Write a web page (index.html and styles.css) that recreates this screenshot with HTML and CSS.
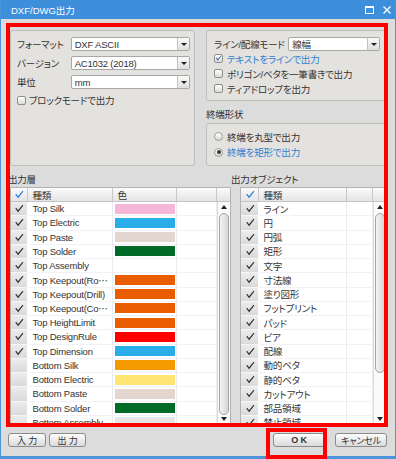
FILE: index.html
```html
<!DOCTYPE html>
<html lang="ja">
<head>
<meta charset="utf-8">
<link rel="stylesheet" href="styles.css">
</head>
<body>
<svg width="0" height="0" class="defs">
  <defs>
    <symbol id="chk" viewBox="0 0 10 9">
      <path d="M1.2 4.6 L2.4 4.1 L4 6.2 L8.6 0.8 L9.4 1.4 L4.1 8.3 Z" fill="currentColor"/>
    </symbol>
  </defs>
</svg>
<div class="window">
  <div class="titlebar">
    <span class="title">DXF/DWG出力</span>
    <div class="tb-icons">
      <svg width="9" height="8" viewBox="0 0 9 8"><rect x="0.5" y="0.5" width="8" height="7" fill="none" stroke="#fff"/><rect x="0" y="0" width="9" height="2" fill="#fff"/></svg>
      <svg width="8" height="8" viewBox="0 0 8 8"><path d="M0.5 0.5 L7.5 7.5 M7.5 0.5 L0.5 7.5" stroke="#fff" stroke-width="1.4"/></svg>
    </div>
  </div>

  <div class="top">
    <div class="group lgroup">
      <div class="field"><span class="lbl">フォーマット</span><div class="combo cl"><span class="ctext">DXF ASCII</span><span class="carrow"><i></i></span></div></div>
      <div class="field"><span class="lbl">バージョン</span><div class="combo cl"><span class="ctext">AC1032 (2018)</span><span class="carrow"><i></i></span></div></div>
      <div class="field"><span class="lbl">単位</span><div class="combo cl"><span class="ctext">mm</span><span class="carrow"><i></i></span></div></div>
      <div class="check"><span class="box"></span><span>ブロックモードで出力</span></div>
    </div>
    <div class="rcol">
      <div class="group rgroup1">
        <div class="field"><span class="lbl2">ライン/配線モード</span><div class="combo cr"><span class="ctext">線幅</span><span class="carrow"><i></i></span></div></div>
        <div class="check rc first"><span class="box on"><svg width="9" height="8"><use href="#chk"/></svg></span><span class="blue">テキストをラインで出力</span></div>
        <div class="check rc"><span class="box"></span><span>ポリゴン/ベタを一筆書きで出力</span></div>
        <div class="check rc"><span class="box"></span><span>ティアドロップを出力</span></div>
      </div>
      <div class="sec-label">終端形状</div>
      <div class="group rgroup2">
        <div class="radio"><span class="rb"></span><span>終端を丸型で出力</span></div>
        <div class="radio"><span class="rb on"></span><span class="blue">終端を矩形で出力</span></div>
      </div>
    </div>
  </div>

  <div class="lists">
    <div class="lsec">
      <div class="list-label">出力層</div>
      <div class="table ltable">
        <div class="thead">
          <div class="hc c-chk hchk"><svg width="10" height="9"><use href="#chk"/></svg></div>
          <div class="hc c-name">種類</div>
          <div class="hc c-color">色</div>
          <div class="hc c-blank"></div>
          <div class="hc c-sh"></div>
        </div>
        <div class="tbody">
          <div class="rows">
            <div class="row"><div class="c-chk chk"><svg width="10" height="9"><use href="#chk"/></svg></div><div class="c-name nm">Top Silk</div><div class="c-color cc"><i class="sw sw-pink"></i></div><div class="c-blank bl"></div></div>
            <div class="row"><div class="c-chk chk"><svg width="10" height="9"><use href="#chk"/></svg></div><div class="c-name nm">Top Electric</div><div class="c-color cc"><i class="sw sw-sky"></i></div><div class="c-blank bl"></div></div>
            <div class="row"><div class="c-chk chk"><svg width="10" height="9"><use href="#chk"/></svg></div><div class="c-name nm">Top Paste</div><div class="c-color cc"><i class="sw sw-beige"></i></div><div class="c-blank bl"></div></div>
            <div class="row"><div class="c-chk chk"><svg width="10" height="9"><use href="#chk"/></svg></div><div class="c-name nm">Top Solder</div><div class="c-color cc"><i class="sw sw-green"></i></div><div class="c-blank bl"></div></div>
            <div class="row"><div class="c-chk chk"><svg width="10" height="9"><use href="#chk"/></svg></div><div class="c-name nm">Top Assembly</div><div class="c-color cc"></div><div class="c-blank bl"></div></div>
            <div class="row"><div class="c-chk chk"><svg width="10" height="9"><use href="#chk"/></svg></div><div class="c-name nm">Top Keepout(Ro⋯</div><div class="c-color cc"><i class="sw sw-orange"></i></div><div class="c-blank bl"></div></div>
            <div class="row"><div class="c-chk chk"><svg width="10" height="9"><use href="#chk"/></svg></div><div class="c-name nm">Top Keepout(Drill)</div><div class="c-color cc"><i class="sw sw-orange"></i></div><div class="c-blank bl"></div></div>
            <div class="row"><div class="c-chk chk"><svg width="10" height="9"><use href="#chk"/></svg></div><div class="c-name nm">Top Keepout(Co⋯</div><div class="c-color cc"><i class="sw sw-orange"></i></div><div class="c-blank bl"></div></div>
            <div class="row"><div class="c-chk chk"><svg width="10" height="9"><use href="#chk"/></svg></div><div class="c-name nm">Top HeightLimit</div><div class="c-color cc"><i class="sw sw-orange"></i></div><div class="c-blank bl"></div></div>
            <div class="row"><div class="c-chk chk"><svg width="10" height="9"><use href="#chk"/></svg></div><div class="c-name nm">Top DesignRule</div><div class="c-color cc"><i class="sw sw-red"></i></div><div class="c-blank bl"></div></div>
            <div class="row"><div class="c-chk chk"><svg width="10" height="9"><use href="#chk"/></svg></div><div class="c-name nm">Top Dimension</div><div class="c-color cc"><i class="sw sw-sky"></i></div><div class="c-blank bl"></div></div>
            <div class="row"><div class="c-chk chk"></div><div class="c-name nm">Bottom Silk</div><div class="c-color cc"><i class="sw sw-amber"></i></div><div class="c-blank bl"></div></div>
            <div class="row"><div class="c-chk chk"></div><div class="c-name nm">Bottom Electric</div><div class="c-color cc"><i class="sw sw-yellow"></i></div><div class="c-blank bl"></div></div>
            <div class="row"><div class="c-chk chk"></div><div class="c-name nm">Bottom Paste</div><div class="c-color cc"><i class="sw sw-beige"></i></div><div class="c-blank bl"></div></div>
            <div class="row"><div class="c-chk chk"></div><div class="c-name nm">Bottom Solder</div><div class="c-color cc"><i class="sw sw-green"></i></div><div class="c-blank bl"></div></div>
            <div class="row"><div class="c-chk chk"></div><div class="c-name nm">Bottom Assembly</div><div class="c-color cc"><i class="sw sw-grey"></i></div><div class="c-blank bl"></div></div>
          </div>
          <div class="vscroll"><i class="up"></i><span class="thumb"></span><i class="down"></i></div>
        </div>
      </div>
    </div>

    <div class="rsec">
      <div class="list-label">出力オブジェクト</div>
      <div class="table rtable">
        <div class="thead">
          <div class="hc c-chk hchk"><svg width="10" height="9"><use href="#chk"/></svg></div>
          <div class="hc c-name">種類</div>
          <div class="hc c-blank"></div>
          <div class="hc c-sh"></div>
        </div>
        <div class="tbody">
          <div class="rows">
            <div class="row"><div class="c-chk chk"><svg width="10" height="9"><use href="#chk"/></svg></div><div class="c-name nm">ライン</div><div class="c-blank bl"></div></div>
            <div class="row"><div class="c-chk chk"><svg width="10" height="9"><use href="#chk"/></svg></div><div class="c-name nm">円</div><div class="c-blank bl"></div></div>
            <div class="row"><div class="c-chk chk"><svg width="10" height="9"><use href="#chk"/></svg></div><div class="c-name nm">円弧</div><div class="c-blank bl"></div></div>
            <div class="row"><div class="c-chk chk"><svg width="10" height="9"><use href="#chk"/></svg></div><div class="c-name nm">矩形</div><div class="c-blank bl"></div></div>
            <div class="row"><div class="c-chk chk"><svg width="10" height="9"><use href="#chk"/></svg></div><div class="c-name nm">文字</div><div class="c-blank bl"></div></div>
            <div class="row"><div class="c-chk chk"><svg width="10" height="9"><use href="#chk"/></svg></div><div class="c-name nm">寸法線</div><div class="c-blank bl"></div></div>
            <div class="row"><div class="c-chk chk"><svg width="10" height="9"><use href="#chk"/></svg></div><div class="c-name nm">塗り図形</div><div class="c-blank bl"></div></div>
            <div class="row"><div class="c-chk chk"><svg width="10" height="9"><use href="#chk"/></svg></div><div class="c-name nm">フットプリント</div><div class="c-blank bl"></div></div>
            <div class="row"><div class="c-chk chk"><svg width="10" height="9"><use href="#chk"/></svg></div><div class="c-name nm">パッド</div><div class="c-blank bl"></div></div>
            <div class="row"><div class="c-chk chk"><svg width="10" height="9"><use href="#chk"/></svg></div><div class="c-name nm">ビア</div><div class="c-blank bl"></div></div>
            <div class="row"><div class="c-chk chk"><svg width="10" height="9"><use href="#chk"/></svg></div><div class="c-name nm">配線</div><div class="c-blank bl"></div></div>
            <div class="row"><div class="c-chk chk"><svg width="10" height="9"><use href="#chk"/></svg></div><div class="c-name nm">動的ベタ</div><div class="c-blank bl"></div></div>
            <div class="row"><div class="c-chk chk"><svg width="10" height="9"><use href="#chk"/></svg></div><div class="c-name nm">静的ベタ</div><div class="c-blank bl"></div></div>
            <div class="row"><div class="c-chk chk"><svg width="10" height="9"><use href="#chk"/></svg></div><div class="c-name nm">カットアウト</div><div class="c-blank bl"></div></div>
            <div class="row"><div class="c-chk chk"><svg width="10" height="9"><use href="#chk"/></svg></div><div class="c-name nm">部品領域</div><div class="c-blank bl"></div></div>
            <div class="row"><div class="c-chk chk"><svg width="10" height="9"><use href="#chk"/></svg></div><div class="c-name nm">禁止領域</div><div class="c-blank bl"></div></div>
          </div>
          <div class="vscroll"><i class="up"></i><span class="thumb"></span><i class="down"></i></div>
        </div>
      </div>
    </div>
  </div>

  <div class="buttons">
    <div class="bgroup">
      <div class="btn b-in">入 力</div>
      <div class="btn b-out">出 力</div>
    </div>
    <div class="bgroup bg-right">
      <div class="btn b-ok">O K</div>
      <div class="btn b-cancel">キャンセル</div>
    </div>
  </div>

  <div class="annot annot-main"></div>
  <div class="annot annot-ok"></div>
</div>
</body>
</html>
```

FILE: styles.css
```css
* { box-sizing: border-box; }
html, body { margin: 0; padding: 0; }
body {
  font-family: "Liberation Sans", "Noto Sans CJK JP", sans-serif;
  font-size: 9.5px;
  color: #333;
  font-feature-settings: "palt";
  letter-spacing: -0.2px;
  background: #fff;
}
.defs { position: absolute; width: 0; height: 0; }

.window {
  position: relative;
  width: 396px;
  height: 459px;
  background: #dcdcdc;
  border: solid #4c94da;
  border-width: 0 1px 3px 1px;
  display: flex;
  flex-direction: column;
}

.titlebar {
  height: 19px;
  flex: none;
  background: #3d8edb;
  color: #fff;
  display: flex;
  align-items: center;
  justify-content: space-between;
  padding: 0 4px 0 10px;
}
.title { font-size: 9.5px; letter-spacing: 0; }
.tb-icons { display: flex; align-items: center; gap: 9px; }
.tb-icons svg { display: block; }

/* top area */
.top { display: flex; gap: 11px; padding: 11px 0 0 9px; flex: none; }
.group {
  border: 1px solid #bdbdbd;
  border-radius: 3px;
  background: #e4e2df;
}
.lgroup { width: 185px; height: 136px; padding: 6px 4px 0 6px; }
.field { display: flex; align-items: center; height: 14px; margin-bottom: 5px; }
.lbl { width: 54px; white-space: nowrap; }
.lbl2 { width: 74.5px; white-space: nowrap; }
.combo {
  height: 14px;
  border: 1px solid #a7a7a7;
  border-radius: 2px;
  background: #fff;
  display: flex;
  align-items: stretch;
}
.cl { width: 120px; }
.cr { width: 92px; }
.ctext { flex: 1; display: flex; align-items: center; padding-left: 3px; white-space: nowrap; }
.carrow {
  width: 12px;
  border-left: 1px solid #c2c2c2;
  background: linear-gradient(#fafafa, #dedede);
  display: flex;
  align-items: center;
  justify-content: center;
}
.carrow i {
  width: 0; height: 0;
  border-left: 3px solid transparent;
  border-right: 3px solid transparent;
  border-top: 3px solid #222;
}

.check { display: flex; align-items: center; height: 12px; white-space: nowrap; }
.box {
  width: 9px; height: 9px;
  border: 1px solid #8e8e8e;
  border-radius: 2px;
  background: linear-gradient(#ffffff, #d9d9d9);
  margin-right: 3px;
  flex: none;
  display: flex; align-items: center; justify-content: center;
}
.box.on { color: #1d5fae; }
.box svg { display: block; margin-top: -1px; }
.blue { color: #2b7fd0; }

.rcol { width: 180px; display: flex; flex-direction: column; }
.rgroup1 { height: 71px; padding: 6px 5px 0 7px; }
.rgroup1 .field { margin-bottom: 1px; }
.rc { height: 13px; margin-bottom: 2px; }
.rc .box { margin-right: 4px; }
.sec-label { height: 22px; padding-top: 8px; line-height: 12px; }
.rgroup2 { height: 43px; padding: 6px 0 0 7px; }
.radio { display: flex; align-items: center; height: 13px; margin-bottom: 2.5px; white-space: nowrap; }
.rb {
  width: 9px; height: 9px;
  border: 1px solid #9a9a9a;
  border-radius: 50%;
  background: linear-gradient(#ffffff, #d6d6d6);
  margin-right: 4px;
  flex: none;
  display: flex; align-items: center; justify-content: center;
}
.rb.on::after {
  content: "";
  width: 4px; height: 4px;
  border-radius: 50%;
  background: #2e3640;
}

/* lists */
.lists { display: flex; padding-left: 7px; flex: none; }
.lsec { width: 223px; }
.rsec { width: 156px; }
.list-label { margin-top: 8px; line-height: 12px; height: 12px; margin-bottom: 1px; white-space: nowrap; }
.table {
  height: 237px;
  border: 1px solid #b3b3b3;
  background: #fff;
  display: flex;
  flex-direction: column;
  overflow: hidden;
}
.ltable { margin-left: 2px; width: 221px; }
.rtable { margin-left: 9px; width: 147px; }
.thead {
  height: 14px;
  flex: none;
  display: flex;
  border-bottom: 1px solid #c4c4c4;
  background: linear-gradient(#fbfbfb, #e4e4e4);
}
.hc {
  border-right: 1px solid #c8c8c8;
  display: flex;
  align-items: center;
  padding-left: 4.5px;
  white-space: nowrap;
}
.hchk { justify-content: center; padding-left: 0; color: #1f7ae0; }
.hchk svg, .chk svg { display: block; }
.c-sh { flex: 1; border-right: none; }
.ltable .c-chk { width: 17px; }
.ltable .c-name { width: 85px; }
.ltable .c-color { width: 64px; }
.ltable .c-blank { width: 40px; }
.rtable .c-chk { width: 18px; }
.rtable .c-name { width: 88px; }
.rtable .c-blank { width: 26px; }

.tbody { flex: 1; display: flex; min-height: 0; }
.rows { display: flex; flex-direction: column; }
.row { height: 14.25px; flex: none; display: flex; }
.chk {
  background: linear-gradient(#ececec, #dadada);
  border-right: 1px solid #fff;
  border-bottom: 1px solid #f6f6f6;
  display: flex;
  align-items: center;
  justify-content: center;
  color: #2f2f2f;
}
.nm {
  border-right: 1px solid #ebebf4;
  border-bottom: 1px solid #f1f1f6;
  display: flex;
  align-items: center;
  padding-left: 4.5px;
  white-space: nowrap;
  overflow: hidden;
}
.cc {
  border-right: 1px solid #ebebf4;
  border-bottom: 1px solid #f1f1f6;
  display: flex;
  align-items: center;
  padding-left: 2px;
}
.bl { border-right: 1px solid #ebebf4; border-bottom: 1px solid #f1f1f6; }
.sw { display: block; width: 60px; height: 10px; }
.sw-pink { background: #f4b7d8; }
.sw-sky { background: #2aaeea; }
.sw-beige { background: #e3d6ce; }
.sw-green { background: #006b28; }
.sw-orange { background: #ea5c00; }
.sw-red { background: #ff0000; }
.sw-amber { background: #f49a00; }
.sw-yellow { background: #ffe672; }
.sw-grey { background: #e6e6e6; }

.vscroll {
  flex: 1;
  border-left: 1px solid #dcdcdc;
  background: #fafafa;
  display: flex;
  flex-direction: column;
  align-items: center;
}
.up {
  margin-top: 3px;
  width: 0; height: 0;
  border-left: 3px solid transparent;
  border-right: 3px solid transparent;
  border-bottom: 4px solid #222;
}
.down {
  margin-top: auto;
  margin-bottom: 2px;
  width: 0; height: 0;
  border-left: 3px solid transparent;
  border-right: 3px solid transparent;
  border-top: 4px solid #222;
}
.thumb {
  margin-top: 4px;
  width: 10px;
  border: 1px solid #a5a5a5;
  border-radius: 5px;
  background: linear-gradient(90deg, #f4f4f4, #d6d6d6);
}
.ltable .thumb { height: 202px; }
.rtable .thumb { height: 160px; }

/* buttons */
.buttons {
  display: flex;
  justify-content: space-between;
  padding: 0 8px 0 7px;
  margin-top: 9px;
  flex: none;
}
.bgroup { display: flex; gap: 3px; }
.bg-right { gap: 10px; }
.btn {
  height: 14px;
  border: 1px solid #8b8b8b;
  border-radius: 3px;
  background: linear-gradient(#fdfdfd, #dadada);
  display: flex;
  align-items: center;
  justify-content: center;
  font-size: 9px;
  white-space: nowrap;
}
.b-in { width: 38px; }
.b-out { width: 37px; }
.b-ok { width: 52px; font-weight: bold; }
.b-cancel { width: 52px; }

/* annotation overlays */
.annot { position: absolute; border: 4px solid #ff0000; }
.annot-main { left: 5px; top: 23px; width: 382px; height: 404px; }
.annot-ok { left: 265px; top: 428px; width: 61px; height: 31px; }
```
